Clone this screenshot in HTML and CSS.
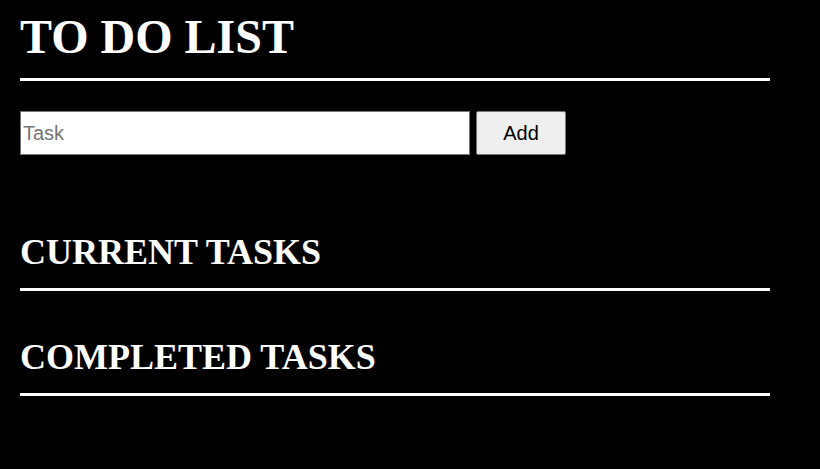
FILE: index.html
```html
<!DOCTYPE html>
<html lang="en">
<head>
<meta charset="utf-8">
<title>To Do List</title>
<link rel="stylesheet" href="styles.css">
</head>
<body>
<div class="app">
  <h1 class="title">TO DO LIST</h1>
  <form class="add-form">
    <input class="task-input" type="text" placeholder="Task">
    <button class="add-btn" type="button">Add</button>
  </form>
  <h2 class="section current">CURRENT TASKS</h2>
  <ul class="task-list"></ul>
  <h2 class="section completed">COMPLETED TASKS</h2>
  <ul class="task-list"></ul>
</div>
</body>
</html>
```

FILE: styles.css
```css
html, body {
  margin: 0;
  padding: 0;
  background: #000;
  color: #fff;
  font-family: "Liberation Serif", "Times New Roman", serif;
}

.app {
  width: 750px;
  margin-left: 20px;
  display: flex;
  flex-direction: column;
}

.title {
  margin: 0;
  padding-top: 9px;
  padding-bottom: 14px;
  font-size: 48px;
  line-height: 55px;
  font-weight: bold;
  border-bottom: 3px solid #fff;
}

.add-form {
  display: flex;
  gap: 6px;
  margin: 30px 0 0 0;
}

.task-input {
  box-sizing: border-box;
  width: 450px;
  height: 44px;
  margin: 0;
  padding: 0 2px;
  border: 1px solid #767676;
  background: #fff;
  font-family: "Liberation Sans", Arial, sans-serif;
  font-size: 20px;
  color: #000;
  outline: none;
}

.task-input::placeholder {
  color: #757575;
}

.add-btn {
  box-sizing: border-box;
  width: 90px;
  height: 44px;
  margin: 0;
  padding: 0;
  border: 1px solid #767676;
  border-radius: 2px;
  background: #efefef;
  color: #000;
  font-family: "Liberation Sans", Arial, sans-serif;
  font-size: 20px;
}

.section {
  margin: 0;
  padding-bottom: 16px;
  font-size: 36px;
  line-height: 40px;
  font-weight: bold;
  border-bottom: 3px solid #fff;
}

.current {
  margin-top: 77px;
}

.completed {
  margin-top: 46px;
}

.task-list {
  display: none;
}
```
